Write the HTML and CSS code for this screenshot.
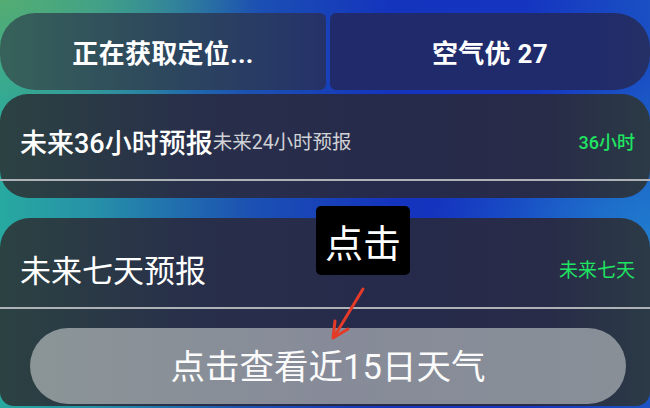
FILE: index.html
```html
<!DOCTYPE html>
<html lang="zh-CN">
<head>
<meta charset="utf-8">
<link rel="stylesheet" href="styles.css">
</head>
<body>
<div class="page">
  <div class="top-row">
    <div class="pill pill-left">正在获取定位...</div>
    <div class="pill pill-right">空气优 27</div>
  </div>
  <div class="card card-36">
    <div class="row row-36">
      <span class="title title-36">未来36小时预报</span>
      <span class="sub">未来24小时预报</span>
      <span class="tag">36小时</span>
    </div>
    <div class="divider"></div>
  </div>
  <div class="card card-7">
    <div class="row row-7">
      <span class="title title-7">未来七天预报</span>
      <span class="tag tag-7">未来七天</span>
    </div>
    <div class="divider"></div>
    <div class="btn">点击查看近15日天气</div>
  </div>
  <div class="tooltip">点击</div>
  <svg class="arrow" width="40" height="60" viewBox="0 0 40 60">
    <path d="M33 3 L4 51" stroke="#e43a28" stroke-width="3" stroke-linecap="round" fill="none"/>
    <path d="M5 35 L3 52 L18 43" stroke="#e43a28" stroke-width="3" stroke-linecap="round" stroke-linejoin="round" fill="none"/>
  </svg>
</div>
</body>
</html>
```
FILE: styles.css
```css
html, body {
  margin: 0;
  padding: 0;
}
body {
  width: 650px;
  height: 408px;
  overflow: hidden;
  font-family: Roboto, "Noto Sans CJK SC", sans-serif;
  color: #fff;
  background:
    radial-gradient(ellipse 260px 140px at 0 0, rgba(86, 172, 112, 0.95), rgba(86, 172, 112, 0) 100%),
    radial-gradient(ellipse 220px 170px at 100% 60%, rgba(32, 128, 206, 0.95), rgba(32, 128, 206, 0) 100%),
    linear-gradient(90deg, #27a9a0 0%, #2692a8 14%, #1c52b2 38%, #1434be 60%, #1534c0 80%, #1a50c4 100%);
}
.page {
  position: relative;
  width: 650px;
  height: 408px;
  padding-top: 13px;
  box-sizing: border-box;
}
.top-row {
  display: flex;
  gap: 4px;
  height: 77px;
}
.pill {
  display: flex;
  align-items: center;
  justify-content: center;
  font-size: 26px;
  font-weight: 700;
  letter-spacing: 0.3px;
}
.pill-left {
  flex: 0 0 326px;
  border-radius: 35px 6px 6px 35px;
  background: linear-gradient(90deg, #37625a 0%, #2e4a5c 45%, #25326a 100%);
}
.pill-right {
  flex: 1;
  border-radius: 6px 35px 35px 6px;
  background: linear-gradient(90deg, #212b6c 0%, #1f2b6b 80%, #253066 100%);
}
.card {
  display: flex;
  flex-direction: column;
  background: linear-gradient(90deg, #2c4242 0%, #282f4a 30%, #262a4b 60%, #282c48 85%, #2b3a46 100%);
}
.card-36 {
  margin-top: 4px;
  height: 104px;
  border-radius: 28px;
}
.card-7 {
  margin-top: 20px;
  height: 188px;
  border-radius: 30px 30px 14px 14px;
}
.row {
  display: flex;
  align-items: center;
  padding: 0 15px 0 20px;
  box-sizing: border-box;
}
.row-36 {
  height: 85px;
  padding-top: 9px;
}
.row-7 {
  height: 89px;
  padding-top: 11px;
}
.title-36 {
  font-size: 27px;
  font-weight: 500;
}
.title-7 {
  font-size: 31px;
}
.sub {
  font-size: 19.5px;
  color: #d0d2d6;
  margin-top: -2px;
}
.tag {
  margin-left: auto;
  font-size: 18px;
  font-weight: 500;
  color: #1fe462;
}
.tag-7 {
  font-size: 19px;
  font-weight: 400;
}
.divider {
  height: 2px;
  background: #aeb1b6;
}
.btn {
  margin: 19px 0 0 30px;
  width: 596px;
  height: 76px;
  border-radius: 38px;
  background: linear-gradient(90deg, #8b9597 0%, #878b99 50%, #888f97 100%);
  display: flex;
  align-items: center;
  justify-content: center;
  font-size: 34.5px;
  color: #fbfbfb;
  padding-bottom: 4px;
  box-sizing: border-box;
}
.tooltip {
  position: absolute;
  left: 316px;
  top: 206px;
  width: 94px;
  height: 69px;
  border-radius: 5px;
  background: #000;
  display: flex;
  align-items: center;
  justify-content: center;
  font-size: 38px;
  color: #fff;
}
.arrow {
  position: absolute;
  left: 330px;
  top: 286px;
}
```
